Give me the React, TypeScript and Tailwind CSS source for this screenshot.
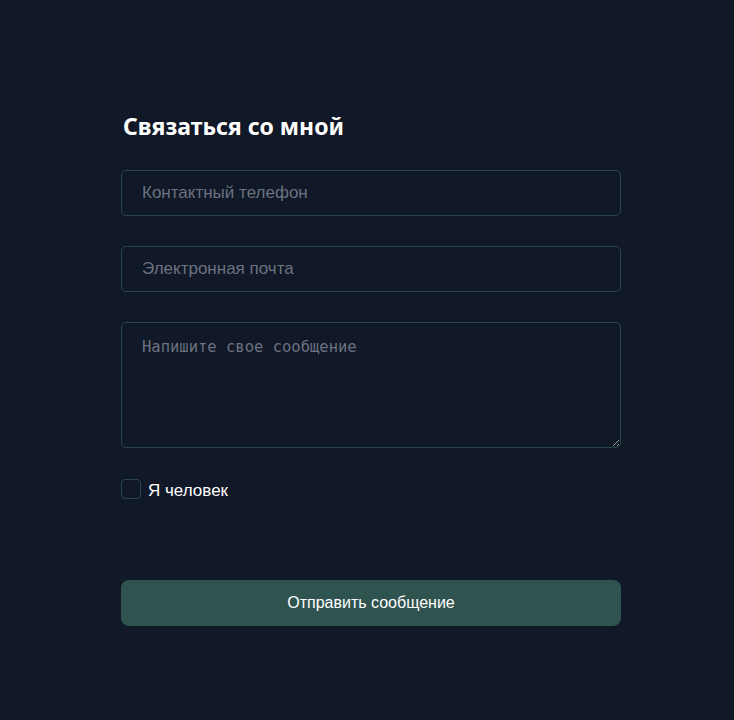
export default function App() {
  return (
    <div className="min-h-[720px] w-full bg-[#111827] font-['Liberation_Sans',Arial,sans-serif]">
      <form className="mx-auto w-[508px] pl-2 pt-[108px]" onSubmit={(event) => event.preventDefault()}>
        <h2 className="mb-[26px] pl-[2px] font-['Noto_Sans',sans-serif] text-[23px] font-bold leading-[36px] text-white">
          Связаться со мной
        </h2>

        <input
          type="tel"
          placeholder="Контактный телефон"
          className="mb-[30px] block h-[46px] w-full rounded-[5px] border border-[#2b4745] bg-transparent px-5 text-[17px] text-white outline-none placeholder:text-[#6b7280]"
        />

        <input
          type="email"
          placeholder="Электронная почта"
          className="mb-[30px] block h-[46px] w-full rounded-[5px] border border-[#2b4745] bg-transparent px-5 text-[17px] text-white outline-none placeholder:text-[#6b7280]"
        />

        <textarea
          placeholder="Напишите свое сообщение"
          className="mb-[31px] block h-[126px] w-full rounded-[5px] border border-[#2b4745] bg-transparent px-5 py-[13px] font-['DejaVu_Sans_Mono',monospace] text-[15.5px] text-white outline-none placeholder:text-[#6b7280]"
        />

        <label className="flex h-5 items-center gap-[7px] text-[17px] leading-5 text-white">
          <input
            type="checkbox"
            className="m-0 h-5 w-5 shrink-0 appearance-none rounded-[4px] border border-[#2b4745] bg-transparent"
          />
          <span className="pt-1">Я человек</span>
        </label>

        <button
          type="submit"
          className="mt-[81px] block h-[46px] w-full rounded-[8px] bg-[#2f5450] text-[16px] text-white"
        >
          Отправить сообщение
        </button>
      </form>
    </div>
  );
}
